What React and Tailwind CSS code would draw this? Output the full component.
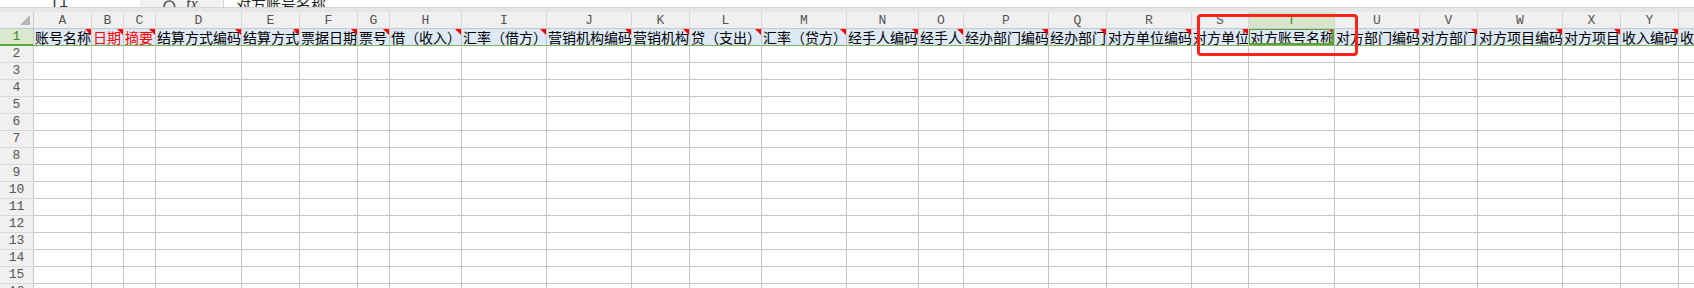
import React from 'react';
import { Search } from 'lucide-react';

const cols = [
  { key: 'A', label: '账号名称' },
  { key: 'B', label: '日期', red: true },
  { key: 'C', label: '摘要', red: true },
  { key: 'D', label: '结算方式编码' },
  { key: 'E', label: '结算方式' },
  { key: 'F', label: '票据日期' },
  { key: 'G', label: '票号' },
  { key: 'H', label: '借（收入）' },
  { key: 'I', label: '汇率（借方）' },
  { key: 'J', label: '营销机构编码' },
  { key: 'K', label: '营销机构' },
  { key: 'L', label: '贷（支出）' },
  { key: 'M', label: '汇率（贷方）' },
  { key: 'N', label: '经手人编码' },
  { key: 'O', label: '经手人' },
  { key: 'P', label: '经办部门编码' },
  { key: 'Q', label: '经办部门' },
  { key: 'R', label: '对方单位编码' },
  { key: 'S', label: '对方单位' },
  { key: 'T', label: '对方账号名称', active: true },
  { key: 'U', label: '对方部门编码' },
  { key: 'V', label: '对方部门' },
  { key: 'W', label: '对方项目编码' },
  { key: 'X', label: '对方项目' },
  { key: 'Y', label: '收入编码' },
  { key: 'Z', label: '收入名称' },
];

const rows = [2, 3, 4, 5, 6, 7, 8, 9, 10, 11, 12, 13, 14, 15, 16];

const mono = "font-['Liberation_Mono',monospace]";
const cjk = "font-['Noto_Sans_CJK_SC','Noto_Sans',sans-serif]";
const gridCols =
  'grid grid-cols-[34px_58px_32px_32px_86px_58px_58px_32px_72px_85px_85px_58px_72px_85px_72px_45px_85px_58px_85px_57px_86px_85px_58px_85px_58px_58px_100px]';

function FormulaBar() {
  return (
    <div className="flex h-[8px] overflow-hidden border-b border-[#d6d6d6] bg-white">
      <div className={`flex w-[140px] items-end pl-[50px] ${mono}`}>
        <span className="-mb-[5px] text-[15px] leading-[16px] text-[#333]">T1</span>
      </div>
      <div className="flex w-[83px] items-end gap-[8px] bg-[#f2f2f2] pl-[22px]">
        <Search className="-mb-[8px] h-[16px] w-[16px] text-[#555]" strokeWidth={2.4} />
        <span className="-mb-[5px] font-['Liberation_Serif',serif] text-[16px] italic leading-[16px] text-[#444]">fx</span>
      </div>
      <div className={`flex flex-1 items-end border-l border-[#d6d6d6] pl-[12px] ${cjk}`}>
        <span className="-mb-[5px] text-[15px] leading-[16px] text-[#222]">对方账号名称</span>
      </div>
    </div>
  );
}

function HeaderCell({ col }) {
  return (
    <div
      className={`flex h-[17px] items-center justify-center border-r border-b border-r-[#d6d6d6] border-b-[#c8c8c8] text-[13px] leading-none ${mono} ${
        col.active ? 'bg-[#d7e6cb] text-[#3b8c1e]' : 'bg-[#f0f0f0] text-[#555]'
      }`}
    >
      {col.key}
    </div>
  );
}

function TitleCell({ col }) {
  return (
    <div
      className={`relative h-[17px] overflow-hidden whitespace-nowrap border-r border-b border-r-[#c6c6c6] border-b-[#7db55c] bg-[#dde9f5] pl-[1px] text-[14px] leading-[16px] ${cjk} ${
        col.red ? 'text-[#ff0000]' : 'text-black'
      }`}
    >
      {col.label}
      <span className="absolute right-0 top-0 h-0 w-0 border-t-[6px] border-l-[6px] border-t-[#ff0000] border-l-transparent" />
      {col.active && (
        <>
          <span className="absolute -left-[1px] -top-[1px] bottom-0 right-0 border-2 border-[#5aa436]" />
          <span className="absolute -bottom-[1px] -right-[1px] h-[5px] w-[5px] bg-[#5aa436]" />
        </>
      )}
    </div>
  );
}

export default function App() {
  return (
    <div className="relative h-[288px] w-[1694px] overflow-hidden bg-white">
      <FormulaBar />
      <div className="h-[4px] bg-[#e6e6e6]" />
      <div className={gridCols}>
        <div className="relative h-[17px] border-r border-b border-[#c8c8c8] bg-[#f0f0f0]">
          <span className="absolute bottom-[3px] right-[3px] h-0 w-0 border-b-[10px] border-l-[10px] border-b-[#b8b8b8] border-l-transparent" />
        </div>
        {cols.map((c) => (
          <HeaderCell key={c.key} col={c} />
        ))}

        <div
          className={`flex h-[17px] items-center justify-center border-r border-r-[#c8c8c8] border-b-2 border-b-[#5aa436] bg-[#d9e8cf] text-[13px] text-[#3b8c1e] ${mono}`}
        >
          1
        </div>
        {cols.map((c) => (
          <TitleCell key={c.key} col={c} />
        ))}

        {rows.map((r) => (
          <React.Fragment key={r}>
            <div
              className={`flex h-[17px] items-center justify-center border-r border-b border-r-[#c8c8c8] border-b-[#dadada] bg-[#f0f0f0] text-[13px] text-[#555] ${mono}`}
            >
              {r}
            </div>
            {cols.map((c) => (
              <div key={c.key} className="h-[17px] border-r border-b border-[#c6c6c6] bg-white" />
            ))}
          </React.Fragment>
        ))}
      </div>

      <div className="pointer-events-none absolute left-[1197px] top-[14px] h-[42px] w-[161px] rounded-[4px] border-[3px] border-[#ff2218]" />
    </div>
  );
}
